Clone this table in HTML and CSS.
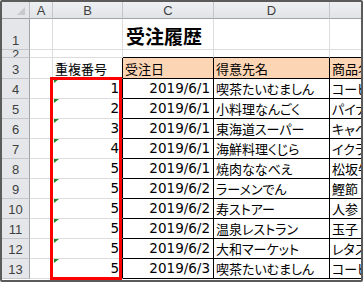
FILE: index.html
```html
<!DOCTYPE html>
<html lang="ja">
<head>
<meta charset="utf-8">
<link rel="stylesheet" href="styles.css">
</head>
<body>
<div class="frame">
  <div class="sheet">
    <div class="corner"><span class="tri"></span></div>
    <div class="ch">A</div>
    <div class="ch">B</div>
    <div class="ch">C</div>
    <div class="ch">D</div>
    <div class="ch">E</div>

    <div class="rh">1</div>
    <div class="c"></div><div class="c"></div>
    <div class="c title-cell"><span class="title">受注履歴</span></div>
    <div class="c"></div><div class="c"></div>

    <div class="rh r2">2</div>
    <div class="c"></div><div class="c"></div>
    <div class="c tb-top"></div><div class="c tb-top"></div><div class="c tb-top"></div>

    <div class="rh">3</div>
    <div class="c"></div>
    <div class="c jp hdrB tb-left">重複番号</div>
    <div class="c jp t th">受注日</div>
    <div class="c jp t th">得意先名</div>
    <div class="c jp t th">商品名</div>
  </div>
  <div class="sheet body-rows" id="rows"></div>
  <div class="redbox"></div>
</div>
<script src="app.js"></script>
</body>
</html>
```

FILE: app.js
```js
const data = [
  [1,'2019/6/1','喫茶たいむましん','コーヒー'],
  [2,'2019/6/1','小料理なんごく','パイナップル'],
  [3,'2019/6/1','東海道スーパー','キャベツ'],
  [4,'2019/6/1','海鮮料理くじら','イクラ'],
  [5,'2019/6/1','焼肉ななべえ','松坂牛'],
  [5,'2019/6/2','ラーメンでん','鰹節'],
  [5,'2019/6/2','寿ストアー','人参'],
  [5,'2019/6/2','温泉レストラン','玉子'],
  [5,'2019/6/2','大和マーケット','レタス'],
  [5,'2019/6/3','喫茶たいむましん','コーヒー']
];
const rows = document.getElementById('rows');
let html = '';
data.forEach((d, i) => {
  html += `<div class="rh">${i + 4}</div>`;
  html += `<div class="c"></div>`;
  html += `<div class="c num tb-left"><span class="err"></span>${d[0]}</div>`;
  html += `<div class="c num t">${d[1]}</div>`;
  html += `<div class="c jp t">${d[2]}</div>`;
  html += `<div class="c jp t">${d[3]}</div>`;
});
rows.innerHTML = html;
```

FILE: styles.css
```css
html, body {
  margin: 0;
  padding: 0;
  background: #fff;
}
.frame {
  position: relative;
  width: 363px;
  height: 282px;
  box-sizing: border-box;
  border: 2px solid #5b5b5b;
  border-radius: 2px;
  overflow: hidden;
  background: #fff;
}
.sheet {
  display: grid;
  grid-template-columns: 28px 23px 70px 91px 116px 90px;
  grid-template-rows: 17px 31px 8px 21px;
}
.body-rows {
  grid-template-rows: repeat(10, 20px);
}
.sheet > div {
  box-sizing: border-box;
  overflow: hidden;
  white-space: nowrap;
}
.corner {
  position: relative;
  background: #e4e6e9;
  border-right: 1px solid #b8bcc2;
  border-bottom: 1px solid #9fa4ab;
}
.tri {
  position: absolute;
  right: 4px;
  bottom: 3px;
  width: 0;
  height: 0;
  border-left: 8px solid transparent;
  border-bottom: 8px solid #c6c9cd;
}
.ch {
  background: linear-gradient(#eef0f2, #e1e4e7);
  border-right: 1px solid #c3c7cc;
  border-bottom: 1px solid #9fa4ab;
  color: #3f3f3f;
  font-family: "Liberation Sans", sans-serif;
  font-size: 13px;
  display: flex;
  align-items: center;
  justify-content: center;
}
.rh {
  background: #e4e6e9;
  border-right: 1px solid #9fa4ab;
  border-bottom: 1px solid #c3c7cc;
  color: #3f3f3f;
  font-family: "Liberation Sans", sans-serif;
  font-size: 13px;
  display: flex;
  align-items: flex-end;
  justify-content: center;
  padding-bottom: 2px;
  line-height: 1;
}
.rh.r2 {
  padding-bottom: 0;
  align-items: flex-end;
  line-height: 4px;
}
.c {
  position: relative;
  border-right: 1px solid #dcdcdc;
  border-bottom: 1px solid #dcdcdc;
  display: flex;
  align-items: flex-end;
  padding: 0 3px 3px 2px;
  line-height: 1;
  color: #000;
}
.jp {
  font-family: "Noto Sans CJK JP", sans-serif;
  font-feature-settings: "palt";
  font-size: 13px;
}
.num {
  font-family: "DejaVu Sans", sans-serif;
  font-size: 13.5px;
  justify-content: flex-end;
}
.t {
  border-right-color: #000;
  border-bottom-color: #000;
}
.tb-top {
  border-bottom-color: #000;
}
.tb-left {
  border-right-color: #000;
}
.th {
  background: #fcd5b4;
}
.hdrB {
  padding-left: 2px;
}
.title-cell {
  overflow: visible !important;
  padding-left: 3px;
  padding-bottom: 4px;
}
.title {
  font-family: "Noto Sans CJK JP", sans-serif;
  font-weight: 700;
  font-size: 19px;
  line-height: 1;
  position: relative;
  z-index: 1;
}
.err {
  position: absolute;
  left: 1px;
  top: 0;
  width: 0;
  height: 0;
  border-top: 4px solid #1f8a2e;
  border-right: 5px solid transparent;
}
.redbox {
  position: absolute;
  left: 48px;
  top: 75px;
  width: 72px;
  height: 203px;
  box-sizing: border-box;
  border: 3px solid #ff0000;
  pointer-events: none;
}
```
